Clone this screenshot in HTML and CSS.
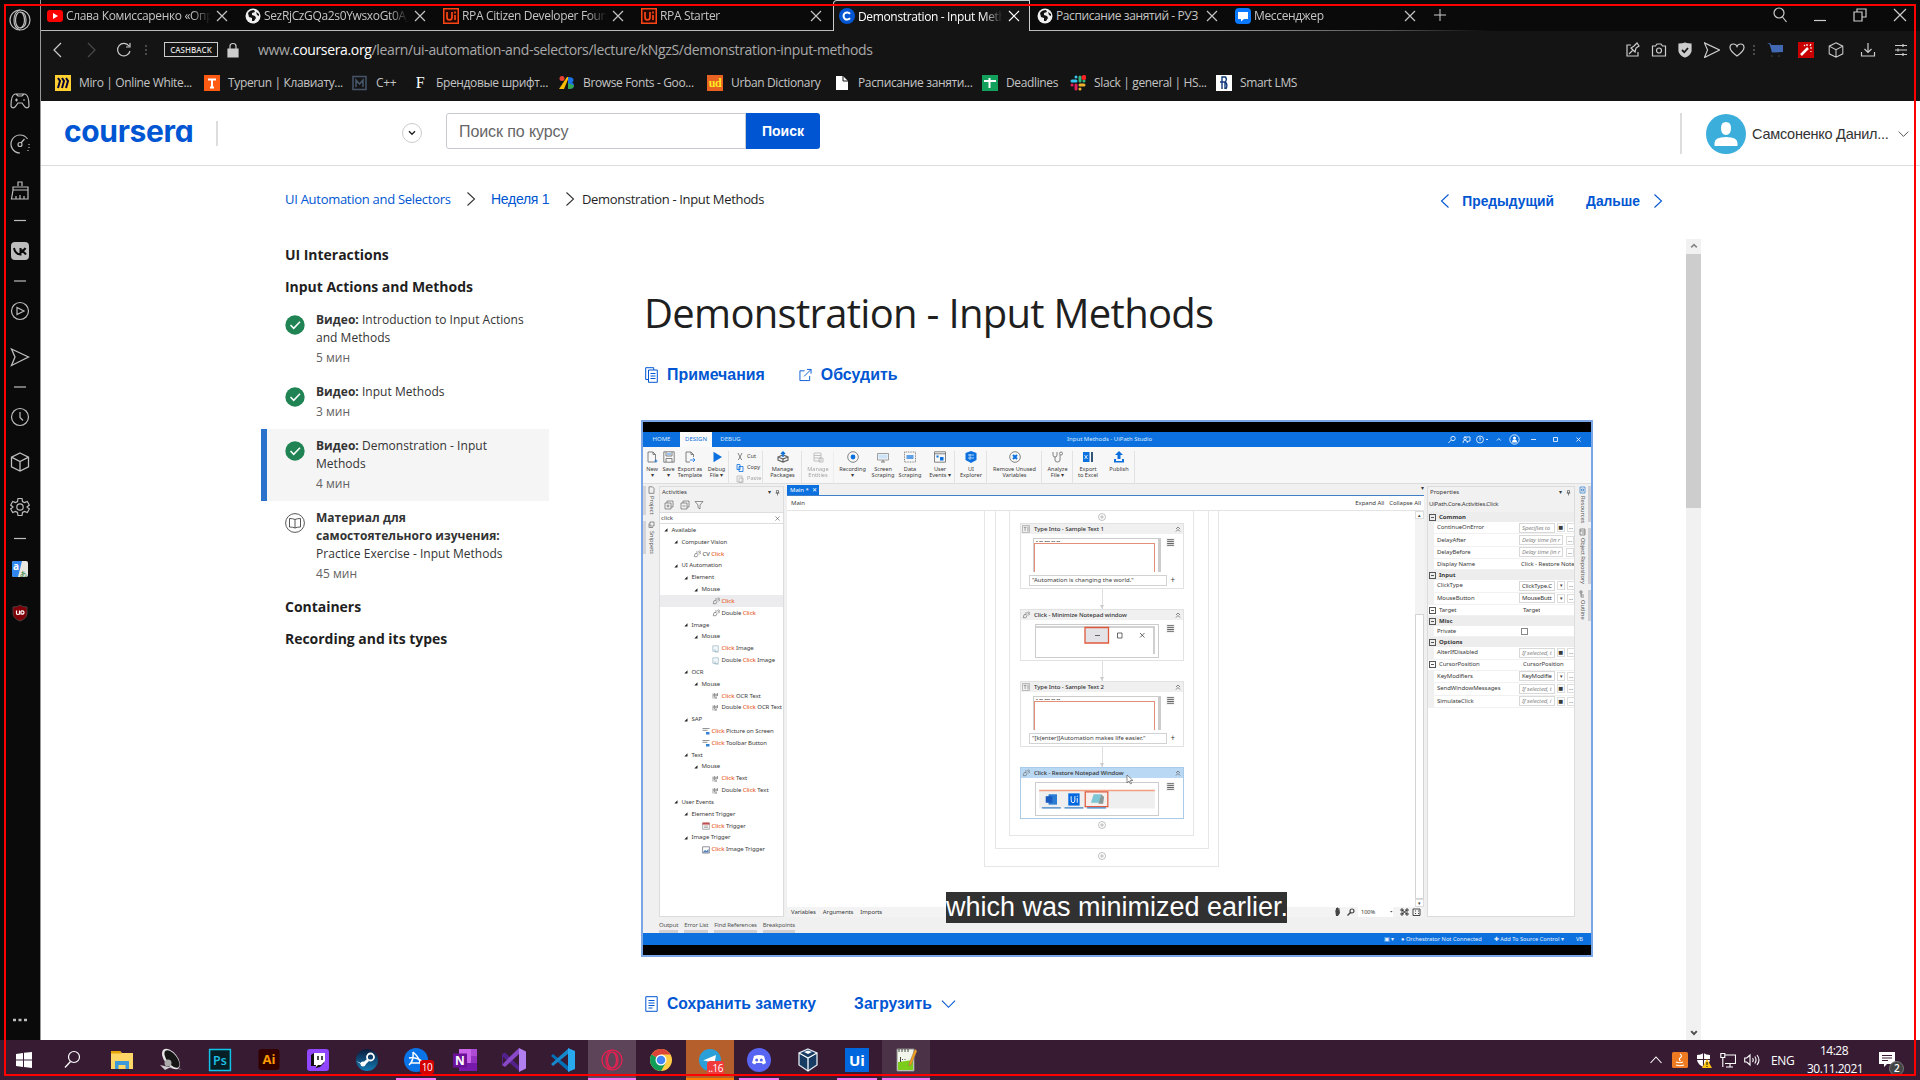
FILE: index.html
```html
<!DOCTYPE html>
<html lang="ru">
<head>
<meta charset="utf-8">
<title>Demonstration - Input Methods | Coursera</title>
<link rel="stylesheet" href="styles.css">
</head>
<body>
<svg class="defs" width="0" height="0">
  <symbol id="x" viewBox="0 0 12 12"><path d="M1 1l10 10M11 1L1 11" fill="none" stroke="currentColor" stroke-width="1.2"/></symbol>
  <symbol id="globe" viewBox="0 0 16 16"><circle cx="8" cy="8" r="7.500" fill="#eee"/><path d="M3 5q2-3 6-3l1 2-3 1v2l3 1 1 2-2 3H7V10L4 9zM11 4l3 2v2l-2-1z" fill="#111"/></symbol>
  <symbol id="uired" viewBox="0 0 16 16"><path d="M0 0h16v16H0z" fill="#fa4616"/><path d="M1.500 1.500h13v13h-13z" fill="#240700"/><path d="M4 4v5q0 3 2.500 3t2.500-3V4M12 7v5M12 3.500v2" fill="none" stroke="#fa4616" stroke-width="1.700"/></symbol>
  <symbol id="cube" viewBox="0 0 24 24"><path d="M12 3l8.500 4.200v9.600L12 21l-8.500-4.200V7.200zM3.500 7.200L12 11.500l8.500-4.300M12 11.500V21" fill="none" stroke="currentColor" stroke-width="1.300"/></symbol>
  <symbol id="send" viewBox="0 0 24 24"><path d="M3.500 4L20.500 12 3.500 20.500 7 12z" fill="none" stroke="currentColor" stroke-width="1.300"/></symbol>
  <symbol id="opera" viewBox="0 0 24 24"><g fill="none" stroke="currentColor" stroke-width="1.200"><circle cx="12" cy="12" r="10"/><ellipse cx="12" cy="12" rx="4.500" ry="8"/><path d="M12 4q6 0 6 8t-6 8M12 2Q6 4 6 12t6 10"/></g></symbol>
  <symbol id="right" viewBox="0 0 10 16"><path d="M1.500 1.500L8.500 8l-7 6.500" fill="none" stroke="currentColor" stroke-width="1.100"/></symbol>
  <symbol id="left" viewBox="0 0 10 16"><path d="M8.500 1.500L1.500 8l7 6.500" fill="none" stroke="currentColor" stroke-width="1.100"/></symbol>
  <symbol id="down" viewBox="0 0 16 10"><path d="M1 1.500l7 7 7-7" fill="none" stroke="currentColor" stroke-width="1.200"/></symbol>
  <symbol id="check" viewBox="0 0 20 20"><circle cx="10" cy="10" r="9.700" fill="#1f8354"/><path d="M5.500 10l3.200 3.300L15 6.800" fill="none" stroke="#fff" stroke-width="1.500"/></symbol>
  <symbol id="plusc" viewBox="0 0 8 8"><g fill="none" stroke="#999" stroke-width=".6"><circle cx="4" cy="4" r="3.500"/><path d="M4 2v4M2 4h4"/></g></symbol>
  <symbol id="tri" viewBox="0 0 4 4"><path d="M3.500 .3v3.200H.3z" fill="#222"/></symbol>
  <symbol id="mouse" viewBox="0 0 8 8"><g fill="none" stroke="#777" stroke-width=".7"><path d="M4 3.500l-2 .2-.8 3H4l1-2z"/><path d="M4 3.500V1M5.500 3l1.500-.6M5.300 1.500a1.500 1.500 0 1 1 1 2.500"/></g></symbol>
  <symbol id="pic" viewBox="0 0 8 8"><path d="M.8.800h5.500v5.500H.8zM3 4v3l3.500.2" fill="#f4f8fa" stroke="#8aabb8" stroke-width=".6"/></symbol>
  <symbol id="ocr" viewBox="0 0 8 8"><path d="M1 1.500v5M2.500 1v4M4 1.500v5M5.500 1v3M1 3h5M2 6h3" fill="none" stroke="#777" stroke-width=".7"/></symbol>
  <symbol id="sap" viewBox="0 0 8 8"><path d="M.5 1.500h7M.5 3.300h5" stroke="#777" stroke-width=".8"/><path d="M4 5h3.500v2.500H4z" fill="#3181d2"/></symbol>
  <symbol id="cal" viewBox="0 0 8 8"><path d="M.7 1h6.600v6.300H.7z" fill="#fff" stroke="#777" stroke-width=".6"/><path d="M.5.600h7v2h-7z" fill="#c84b4b"/><path d="M2 4h4M2 5.600h4" stroke="#888" stroke-width=".7"/></symbol>
  <symbol id="pict" viewBox="0 0 8 8"><path d="M.6.800h6.800v6.300H.6z" fill="#fff" stroke="#667" stroke-width=".7"/><path d="M1 6l2-2 1.500 1L6.500 3v3.500H1z" fill="#507fb3"/></symbol>
  <symbol id="up2" viewBox="0 0 6 6"><path d="M1 3l2-2 2 2M1 5.500l2-2 2 2" fill="none" stroke="#555" stroke-width=".7"/></symbol>
  <symbol id="ti" viewBox="0 0 8 8"><path d="M.5.500h7v7h-7z" fill="none" stroke="#888" stroke-width=".5"/><path d="M1.700 2.300h2.800M3.100 2.300V6M6 1.500v5" fill="none" stroke="#666" stroke-width=".6"/></symbol>
  <symbol id="pin" viewBox="0 0 5 6"><path d="M1.500.500h2v2.500h-2zM.6 3h3.800M2.500 3v2.500" fill="none" stroke="#444" stroke-width=".6"/></symbol>
  <symbol id="burger" viewBox="0 0 8 8"><path d="M0 0h8v8H0z" fill="#f3f3f3"/><path d="M1 1.500h6M1 3.200h6M1 4.900h6M1 6.500h6" stroke="#555" stroke-width=".8"/></symbol>
</svg>

<div class="screen">
<aside class="rail">
  <svg><use href="#opera"/></svg>
  <svg viewBox="0 0 24 24"><path d="M7 5h10q4 1 4 12-1 3-4 1l-3-4h-4l-3 4q-3 2-4-1Q3 6 7 5zM8 5l2 2h4l2-2M7 11h3M8.500 9.500v3M15 11h2"/></svg>
  <svg viewBox="0 0 24 24"><path d="M12 21a9 9 0 1 1 7.500-14M13 11l3.500-4M21 12v1M21 15v1M20 18v1"/><circle cx="12" cy="12.500" r="2"/></svg>
  <svg viewBox="0 0 24 24"><path d="M10 7V3h4v4M5 8h15v3H5zM5 11L3.500 20H20v-9M8 20v-3M12 20v-4M16 20v-3"/></svg>
  <svg viewBox="0 0 24 24"><path d="M6 11.500h12"/></svg>
  <svg viewBox="0 0 24 24"><rect x="3" y="3" width="18" height="18" rx="4" fill="#bdbdbd" stroke="none"/><path d="M6 9q1 6 6.500 6.500V9M12.500 12Q16 12 17.500 9M12.500 12.200Q16 12.500 18 15.500" stroke="#0a0a0a" stroke-width="2"/></svg>
  <svg viewBox="0 0 24 24"><path d="M6 12h12"/></svg>
  <svg viewBox="0 0 24 24"><circle cx="12" cy="12" r="8.500"/><path d="M9 8.500v7l7-3.500z"/></svg>
  <svg><use href="#send"/></svg>
  <svg viewBox="0 0 24 24"><path d="M6 12h12"/></svg>
  <svg viewBox="0 0 24 24"><circle cx="12" cy="12" r="8.500"/><path d="M12 7v5.500l3 3"/></svg>
  <svg><use href="#cube"/></svg>
  <svg viewBox="0 0 24 24"><circle cx="12" cy="12" r="3.200"/><path d="M10 3.500h4l.5 3 2 1.100 2.800-1.100 2 3.500-2.300 2 2.300 2-2 3.500-2.800-1.100-2 1.100-.5 3h-4l-.5-3-2-1.100-2.800 1.100-2-3.500L5 12l-2.300-2 2-3.500 2.800 1.100 2-1.100z"/></svg>
  <svg viewBox="0 0 24 24"><path d="M6 12.500h12"/></svg>
  <svg viewBox="0 0 24 24"><rect x="4" y="4" width="16" height="16" rx="2" fill="#e8e8e0" stroke="none"/><path d="M4 6q0-2 2-2h8l-4 16H6q-2 0-2-2z" fill="#2f86ee" stroke="none"/><text x="5" y="13" font-size="10" fill="#fff" stroke="none" font-weight="bold">a</text><text x="12" y="18.500" font-size="7" fill="#287a3a" stroke="none">あ</text></svg>
  <svg viewBox="0 0 24 24"><path d="M5 6q5 0 7-2 2 2 7 2v7q-1 5-7 7-6-2-7-7z" fill="#800008" stroke="#555" stroke-width=".7"/><path d="M8.500 9.500v3q0 1 1.500 1t1.500-1v-3M13 10v3q3 .5 3-1.500t-3-1.500" stroke="#fff"/></svg>
  <svg viewBox="0 0 24 24"><path d="M5 12h3M10.500 12h3M16 12h3" stroke-width="2.500"/></svg>
</aside>

<div class="browser">
  <nav class="tabs">
    <div class="tab"><svg class="fav" viewBox="0 0 16 16"><rect y="2" width="16" height="12" rx="3" fill="#f00"/><path d="M6 5v6l5-3z" fill="#fff"/></svg><span>Слава Комиссаренко «Опр</span><svg class="cl"><use href="#x"/></svg></div>
    <div class="tab"><svg class="fav"><use href="#globe"/></svg><span>SezRjCzGQa2s0YwsxoGt0A_</span><svg class="cl"><use href="#x"/></svg></div>
    <div class="tab"><svg class="fav"><use href="#uired"/></svg><span>RPA Citizen Developer Foun</span><svg class="cl"><use href="#x"/></svg></div>
    <div class="tab"><svg class="fav"><use href="#uired"/></svg><span>RPA Starter</span><svg class="cl"><use href="#x"/></svg></div>
    <div class="tab on"><svg class="fav" viewBox="0 0 16 16"><circle cx="8" cy="8" r="8" fill="#0056d2"/><path d="M11 5.800a3.600 3.600 0 1 0 0 4.400" fill="none" stroke="#fff" stroke-width="2"/></svg><span>Demonstration - Input Meth</span><svg class="cl"><use href="#x"/></svg></div>
    <div class="tab"><svg class="fav"><use href="#globe"/></svg><span class="full">Расписание занятий - РУЗ</span><svg class="cl"><use href="#x"/></svg></div>
    <div class="tab"><svg class="fav" viewBox="0 0 16 16"><rect width="16" height="16" rx="4" fill="#0a78ff"/><path d="M3 4h10v7H9l-3 2.500V11H3z" fill="#fff"/></svg><span>Мессенджер</span><svg class="cl"><use href="#x"/></svg></div>
    <svg class="new" viewBox="0 0 12 12"><path d="M6 0v12M0 6h12"/></svg>
    <div class="win">
      <svg viewBox="0 0 16 16"><circle cx="7" cy="6" r="5"/><path d="M10.500 10l4 5"/></svg>
      <svg viewBox="0 0 16 16"><path d="M2 13.500h12"/></svg>
      <svg viewBox="0 0 16 16"><path d="M2 5h8v9H2zM5 5V2h9v8h-4"/></svg>
      <svg viewBox="0 0 16 16"><path d="M2 2l12 12M14 2L2 14"/></svg>
    </div>
  </nav>
  <div class="address">
    <svg viewBox="0 0 16 16"><path d="M11 1L4 8l7 7"/></svg>
    <svg class="dim" viewBox="0 0 16 16"><path d="M5 1l7 7-7 7"/></svg>
    <svg viewBox="0 0 16 16"><path d="M13 4a6.300 6.300 0 1 0 1 5M14 1v4h-4"/></svg>
    <svg class="dim" viewBox="0 0 16 16"><path d="M6 3v2M6 7v2M6 11v2" stroke-width="2"/></svg>
    <span class="cash">CASHBACK</span>
    <svg viewBox="0 0 16 16"><path d="M3 7h10v8H3z" fill="#ccc"/><path d="M5 7V4q0-2.500 3-2.500T11 4v3"/></svg>
    <span class="url">www.<b>coursera.org</b>/learn/ui-automation-and-selectors/lecture/kNgzS/demonstration-input-methods</span>
    <div class="tools">
      <svg viewBox="0 0 16 16"><path d="M6 3H2v11h11v-4M4 12l4-4M6 6l4 4 1-4 3-2-2-3-3 3zM14 4l-2-3"/></svg>
      <svg viewBox="0 0 16 16"><path d="M1.500 4h3L6 2h4l1.500 2h3v10h-13z"/><circle cx="8" cy="8.500" r="2.500"/></svg>
      <svg viewBox="0 0 16 16"><path d="M2 2q4 0 6-1 2 1 6 1v7q-1 4-6 6-5-2-6-6z" fill="#ccc"/><path d="M5 8l2.300 2.300L11 6" stroke="#141414" stroke-width="1.800"/></svg>
      <svg viewBox="3 3 18 18"><use href="#send" width="24" height="24"/></svg>
      <svg viewBox="0 0 16 16"><path d="M8 14Q1 9 1 5.500 1 2 4.500 2 7 2 8 4.500 9 2 11.500 2 15 2 15 5.500 15 9 8 14z"/></svg>
      <svg class="dim" viewBox="0 0 16 16"><path d="M8 3v2M8 7v2M8 11v2" stroke-width="2"/></svg>
      <svg viewBox="0 0 16 16"><path d="M0 1h3l1.500 2H16v7l-11 .5L2.500 2z" fill="#426ab4" stroke="none"/><circle cx="5" cy="14" r="1" fill="#333" stroke="none"/><circle cx="12" cy="14" r="1" fill="#333" stroke="none"/></svg>
      <svg viewBox="0 0 16 16"><path d="M0 0h16v16H0z" fill="#c80000" stroke="none"/><path d="M3 13l7-7" stroke="#fff" stroke-width="2.500"/><path d="M9 2v2M13 2l-1 2M14 6h-2M13 9v1M6 3l1 1" stroke="#fff"/></svg>
      <svg viewBox="2 2 20 20"><use href="#cube" width="24" height="24"/></svg>
      <svg viewBox="0 0 16 16"><path d="M8 1v9M4.500 7L8 10.500 11.500 7M1.500 10v4h13v-4"/></svg>
      <svg viewBox="0 0 16 16"><path d="M2 3.500h12M2 8h12M2 12.500h12M10 2v3M5 6.500v3M10 11v3"/></svg>
    </div>
  </div>
  <div class="bookmarks">
    <a><svg viewBox="0 0 16 16"><path d="M0 0h16v16H0z" fill="#ffd02f"/><path d="M3 3l2 3-2 7M7 3l2 3-2 7M11 3l2 3-2 7" fill="none" stroke="#050038" stroke-width="2"/></svg>Miro | Online White...</a>
    <a><svg viewBox="0 0 16 16"><path d="M0 0h16v16H0z" fill="#ff5a14"/><path d="M4 4.500h8M8 4v8.500M6 12.500h4" stroke="#fff" stroke-width="2"/></svg>Typerun | Клавиату...</a>
    <a><svg viewBox="0 0 16 16"><path d="M1 1.500h13v13H1zM4 12V5l3.500 4L11 5v7" fill="none" stroke="#465569" stroke-width="1.500"/></svg>C++</a>
    <a><i class="f">F</i>Брендовые шрифт...</a>
    <a><svg viewBox="0 0 16 16"><circle cx="3" cy="3.500" r="2.500" fill="#ea4335"/><path d="M8 2h2L5 14H0z" fill="#fbbc04"/><path d="M9 2v12q6 0 6-3.500 0-2.500-2-3 1.500-1 1.500-2.500Q14.500 2 9 2z" fill="#1a73e8"/><path d="M9 8v6q6 0 6-3.500z" fill="#34a853"/></svg>Browse Fonts - Goo...</a>
    <a><i class="ud">ud</i>Urban Dictionary</a>
    <a><svg viewBox="0 0 16 16"><path d="M2 1h7l5 5v9H2z" fill="#fff"/><path d="M9 1v5h5" stroke="#141414" fill="none"/></svg>Расписание заняти...</a>
    <a><svg viewBox="0 0 16 16"><path d="M0 0h16v16H0z" fill="#12a05c"/><path d="M2 6h12M7.500 3v10" stroke="#fff" stroke-width="2"/></svg>Deadlines</a>
    <a><svg viewBox="0 0 16 16"><g stroke-width="3" stroke-linecap="round"><path d="M2 6h4M6 2v.1" stroke="#36c5f0"/><path d="M10 2v4M14 6h-.1" stroke="#2eb67d"/><path d="M10 10h4M10 14v-.1" stroke="#ecb22e"/><path d="M6 10v4M2 10h.1" stroke="#e01e5a"/></g><circle cx="14" cy="2.500" r="2.500" fill="#f22"/></svg>Slack | general | HS...</a>
    <a><svg viewBox="0 0 16 16"><path d="M0 0h16v16H0z" fill="#fff"/><path d="M6 14V2h3.500q2 2.500-.5 5H6M4 7h5.500q2.500 3 .5 7M9 7v7" fill="none" stroke="#123a7a" stroke-width="1.400"/></svg>Smart LMS</a>
  </div>

  <div class="page">
    <header class="top">
      <span class="logo">coursera</span>
      <i class="bar"></i>
      <span class="drop"><svg viewBox="0 0 8 6"><path d="M1 1.200l3 3 3-3" fill="none" stroke="#222" stroke-width="1.400"/></svg></span>
      <div class="search"><span>Поиск по курсу</span><button>Поиск</button></div>
      <div class="user"><svg class="ava" viewBox="0 0 40 40"><circle cx="20" cy="20" r="20" fill="#3caedb"/><path d="M20 8q5 0 5 6 0 7-5 7t-5-7q0-6 5-6zM8.500 32v-3q0-6 11.500-6t11.500 6v3z" fill="#fff"/></svg><span>Самсоненко Данил...</span><svg class="chev"><use href="#down"/></svg></div>
    </header>
    <div class="crumbs">
      <a>UI Automation and Selectors</a><svg><use href="#right"/></svg><a>Неделя 1</a><svg><use href="#right"/></svg><span>Demonstration - Input Methods</span>
      <div class="pager"><svg><use href="#left"/></svg><b>Предыдущий</b><b>Дальше</b><svg><use href="#right"/></svg></div>
    </div>
    <div class="cols">
      <nav class="lessons">
        <h3>UI Interactions</h3>
        <h3>Input Actions and Methods</h3>
        <div class="les"><svg><use href="#check"/></svg><p><b>Видео:</b> Introduction to Input Actions<br>and Methods<small>5 мин</small></p></div>
        <div class="les"><svg><use href="#check"/></svg><p><b>Видео:</b> Input Methods<small>3 мин</small></p></div>
        <div class="les cur"><svg><use href="#check"/></svg><p><b>Видео:</b> Demonstration - Input<br>Methods<small>4 мин</small></p></div>
        <div class="les"><svg viewBox="0 0 20 20"><g fill="none" stroke="#444" stroke-width=".9"><circle cx="10" cy="10" r="9.400"/><path d="M10 6.500Q8 5.500 4.500 5.500v8.500q3.500 0 5.500 1 2-1 5.500-1V5.500Q12 5.500 10 6.500V15"/></g></svg><p><b>Материал для<br>самостоятельного изучения:</b><br>Practice Exercise - Input Methods<small>45 мин</small></p></div>
        <h3>Containers</h3>
        <h3>Recording and its types</h3>
      </nav>
      <main>
        <h1>Demonstration - Input Methods</h1>
        <div class="acts">
          <svg viewBox="0 0 13 16"><path d="M3 12.500H.7V.700h8V3M3.500 3h8.800v12.300H3.500zM5.500 6.500h5M5.500 9h5M5.500 11.500h5"/></svg><b>Примечания</b>
          <svg viewBox="0 0 14 14"><path d="M6 2.500H1v10.500h10.500V8M8.500 1H13v4.500M13 1L5.500 8.500"/></svg><b>Обсудить</b>
        </div>

        <div class="video">
          <div class="vtitle">
            <span>HOME</span><span class="sel">DESIGN</span><span>DEBUG</span><em>Input Methods - UiPath Studio</em>
            <svg viewBox="0 0 148 15"><g fill="none" stroke="#e8f1fc" stroke-width=".9"><circle cx="10" cy="6.500" r="2.200"/><path d="M8.300 8l-3 3"/><path d="M21 5h6v4l-3 .5M20 11q0-3 2-3t2.500 3"/><circle cx="22" cy="6.500" r="1.300"/><circle cx="37" cy="7.500" r="3.500"/><path d="M36 6.500q1-1.500 2 0l-1 1.200v1M43 7.500h2M54 8.500l1.800-2 1.800 2"/><circle cx="71.500" cy="7.500" r="4.700"/><path d="M88 7.500h5M110.500 5.500h4v4h-4zM133.500 5.500l4 4M137.500 5.500l-4 4"/></g><path d="M69 10.500q0-3 2.500-3t2.500 3z" fill="#fff"/><circle cx="71.500" cy="6" r="1.500" fill="#fff"/></svg>
          </div>
          <div class="ribbon">
            <div class="rb"><svg viewBox="0 0 12 12"><path d="M2 1h5l2.500 2.500V11H2zM7 1v2.500h2.500"/><path d="M8.500 10h3M10 8.500v3" class="bl"/></svg>New<br>▾</div>
            <div class="rb"><svg viewBox="0 0 12 12"><path d="M.8.800h10.400v10.400H.8zM3 1v4h6V1M3 11V7.500h6V11"/><path d="M4 3h4" class="bl"/></svg>Save<br>▾</div>
            <div class="rb"><svg viewBox="0 0 12 12"><path d="M6 11H2V1h5l2.500 2.500V6M7 1v2.500h2.500"/><path d="M6 9h5M9 7l2 2-2 2" class="bl"/></svg>Export as<br>Template</div>
            <div class="rb"><svg viewBox="0 0 12 12"><path d="M2.500.800L11 6l-8.500 5.200z" class="fb"/></svg>Debug<br>File ▾</div>
            <div class="rc"><span><svg viewBox="0 0 8 8"><path d="M2 0l3 6M6 0L3 6M2 6.500h1M5 6.500h1"/></svg>Cut</span><span><svg viewBox="0 0 8 8"><path d="M1 .5h3v5H1zM3 2.500h4v5H3z" class="bl"/></svg>Copy</span><span class="off"><svg viewBox="0 0 8 8"><path d="M1 1h5v6H1zM3 3h4v4.500H3z"/></svg>Paste</span></div>
            <div class="rb"><svg viewBox="0 0 12 12"><path d="M1 6l5-2 5 2v3l-5 2-5-2zM6 7v4M1 6l5 2 5-2" stroke-width="1.200"/><path d="M6 6V1M4 3l2-2 2 2" class="bl" stroke-width="1.500"/></svg>Manage<br>Packages</div>
            <div class="rb off"><svg viewBox="0 0 12 12"><path d="M2 2h7v8H2zM2 4.500h7M2 7h7M7 7h4v4H7z"/></svg>Manage<br>Entities</div>
            <div class="rb"><svg viewBox="0 0 12 12"><circle cx="6" cy="6" r="5.300"/><circle cx="6" cy="6" r="2.400" class="fb"/></svg>Recording<br>▾</div>
            <div class="rb"><svg viewBox="0 0 12 12"><path d="M.5 2.500h11v6.500H.5z" stroke="#888"/><path d="M1.500 3.500h9v4h-9z" fill="#cde3f7" stroke="none"/><path d="M4 11h4M6 9v2"/></svg>Screen<br>Scraping</div>
            <div class="rb"><svg viewBox="0 0 12 12"><path d="M.5 1h11v10H.5z" stroke-dasharray="1 .7"/><path d="M2.500 4h7v4h-7z" class="fb" opacity=".65"/></svg>Data<br>Scraping</div>
            <div class="rb"><svg viewBox="0 0 12 12"><path d="M.5.800h11v10.400H.5zM.5 2.800h11"/><path d="M2.500 4.500h2v2h-2zM6 6h3.500v3.500H6z" class="fb"/></svg>User<br>Events ▾</div>
            <div class="rb"><svg viewBox="0 0 12 12"><path d="M6 0l5.500 2v7L6 12 .5 9V2z" class="fb"/><path d="M3 4h6M3 7h6M5 3v6" stroke="#cfe4fa"/></svg>UI<br>Explorer</div>
            <div class="rb"><svg viewBox="0 0 12 12"><circle cx="6" cy="6" r="5.300"/><path d="M4 4l4 4M8 4L4 8" class="bl" stroke-width="2"/></svg>Remove Unused<br>Variables</div>
            <div class="rb"><svg viewBox="0 0 12 12"><path d="M1 1v3q0 2 2 2t2-2V1M3 6v3q0 2 2.500 2T8 9V4"/><circle cx="9" cy="2.500" r="1.500"/></svg>Analyze<br>File ▾</div>
            <div class="rb"><svg viewBox="0 0 12 12"><path d="M1 1h6.500v10H1z" class="fb"/><path d="M2.500 4l3 4M5.500 4l-3 4" stroke="#fff"/><path d="M9 1h2v10H9z" fill="#357" stroke="none"/></svg>Export<br>to Excel</div>
            <div class="rb"><svg viewBox="0 0 12 12"><path d="M6 0l4 4H7.500v4h-3V4H2zM1 8h2v2h6V8h2v3.500H1z" class="fb"/></svg>Publish</div>
            <div></div>
          </div>
          <div class="work">
            <div class="dock ldock"><span class="p1"><svg viewBox="0 0 7 8"><path d="M1 .8h3.500l1.500 1.500v5H1z"/></svg>Project</span><span class="p2"><svg viewBox="0 0 7 8"><path d="M2 1h4v4H2zM1 2.500v4h4"/></svg>Snippets</span></div>
            <section class="acti">
              <div class="ph">Activities<i></i>▾<svg><use href="#pin"/></svg></div>
              <div class="pt"><svg viewBox="0 0 40 10"><path d="M2 3h6v6H2zM4 3V1h6v6H8M5 4.500v3M3.500 6h3M18 3h6v6h-6zM20 3V1h6v6h-2M19.500 6h3M32 1.500h8L37 5v4l-2-1.500V5z" fill="none" stroke="#666" stroke-width=".7"/></svg></div>
              <div class="ps">click<svg><use href="#x"/></svg></div>
              <ul class="tree">
                <li class="l0"><svg><use href="#tri"/></svg>Available</li>
                <li class="l1"><svg><use href="#tri"/></svg>Computer Vision</li>
                <li class="l2 leaf"><svg><use href="#mouse"/></svg>CV&nbsp;<b>Click</b></li>
                <li class="l1"><svg><use href="#tri"/></svg>UI Automation</li>
                <li class="l2"><svg><use href="#tri"/></svg>Element</li>
                <li class="l3"><svg><use href="#tri"/></svg>Mouse</li>
                <li class="l4 leaf hot"><svg><use href="#mouse"/></svg><b>Click</b></li>
                <li class="l4 leaf"><svg><use href="#mouse"/></svg>Double&nbsp;<b>Click</b></li>
                <li class="l2"><svg><use href="#tri"/></svg>Image</li>
                <li class="l3"><svg><use href="#tri"/></svg>Mouse</li>
                <li class="l4 leaf"><svg><use href="#pic"/></svg><b>Click</b>&nbsp;Image</li>
                <li class="l4 leaf"><svg><use href="#pic"/></svg>Double&nbsp;<b>Click</b>&nbsp;Image</li>
                <li class="l2"><svg><use href="#tri"/></svg>OCR</li>
                <li class="l3"><svg><use href="#tri"/></svg>Mouse</li>
                <li class="l4 leaf"><svg><use href="#ocr"/></svg><b>Click</b>&nbsp;OCR Text</li>
                <li class="l4 leaf"><svg><use href="#ocr"/></svg>Double&nbsp;<b>Click</b>&nbsp;OCR Text</li>
                <li class="l2"><svg><use href="#tri"/></svg>SAP</li>
                <li class="l3 leaf"><svg><use href="#sap"/></svg><b>Click</b>&nbsp;Picture on Screen</li>
                <li class="l3 leaf"><svg><use href="#sap"/></svg><b>Click</b>&nbsp;Toolbar Button</li>
                <li class="l2"><svg><use href="#tri"/></svg>Text</li>
                <li class="l3"><svg><use href="#tri"/></svg>Mouse</li>
                <li class="l4 leaf"><svg><use href="#ocr"/></svg><b>Click</b>&nbsp;Text</li>
                <li class="l4 leaf"><svg><use href="#ocr"/></svg>Double&nbsp;<b>Click</b>&nbsp;Text</li>
                <li class="l1"><svg><use href="#tri"/></svg>User Events</li>
                <li class="l2"><svg><use href="#tri"/></svg>Element Trigger</li>
                <li class="l3 leaf"><svg><use href="#cal"/></svg><b>Click</b>&nbsp;Trigger</li>
                <li class="l2"><svg><use href="#tri"/></svg>Image Trigger</li>
                <li class="l3 leaf"><svg><use href="#pict"/></svg><b>Click</b>&nbsp;Image Trigger</li>
              </ul>
            </section>
            <section class="mainp">
              <div class="mt"><span>Main * &nbsp;✕</span><i>▾</i></div>
              <div class="mb"><span>Main</span><span>Expand All</span><span>Collapse All</span></div>
              <div class="canvas">
                <div class="f1"><div class="f2"><div class="f3">
                  <svg class="pc"><use href="#plusc"/></svg>
                  <div class="card big"><div class="ch"><svg><use href="#ti"/></svg>Type Into - Sample Text 1<svg class="u"><use href="#up2"/></svg></div><div class="cb"><div class="shot red"><i>- -- --- -- --</i><u></u></div><svg><use href="#burger"/></svg></div><div class="ci"><span>"Automation is changing the world."</span><b>+</b></div></div>
                  <div class="arr"></div>
                  <div class="card"><div class="ch"><svg><use href="#mouse"/></svg>Click - Minimize Notepad window<svg class="u"><use href="#up2"/></svg></div><div class="cb"><div class="shot"><svg class="tb" viewBox="0 0 122 32"><path d="M0 2h118v27" fill="none" stroke="#c4c4c4" stroke-width="1.600"/><path d="M49 2.500h23.500v15.500H49z" fill="#e3e3e7" stroke="#e0593c" stroke-width="1.300"/><path d="M59 10.500h5M81.500 8h4.500v5h-4.500zM104 8l4.500 4.500M108.500 8l-4.500 4.500" fill="none" stroke="#444" stroke-width=".8"/></svg></div><svg><use href="#burger"/></svg></div></div>
                  <div class="arr"></div>
                  <div class="card big"><div class="ch"><svg><use href="#ti"/></svg>Type Into - Sample Text 2<svg class="u"><use href="#up2"/></svg></div><div class="cb"><div class="shot red"><i>- -- --- -- --</i><u></u></div><svg><use href="#burger"/></svg></div><div class="ci"><span>"[k(enter)]Automation makes life easier."</span><b>+</b></div></div>
                  <div class="arr"></div>
                  <div class="card act"><div class="ch"><svg><use href="#mouse"/></svg>Click - Restore Notepad Window<svg class="u"><use href="#up2"/></svg></div><div class="cb"><div class="shot"><svg class="tb" viewBox="0 0 123 34"><path d="M0 8h123v19H0z" fill="#efefef"/><path d="M0 8h123" stroke="#f0a080" stroke-width="1.500"/><path d="M10 12h9v11h-9z" fill="#2b7cd3"/><path d="M7 14h7v7H7z" fill="#185abd"/><path d="M31 11h12v13H31z" fill="#0067df"/><path d="M34 14v4q0 3 2 3t2-3v-4M40.500 16v5M40.500 13.500v1.200" fill="none" stroke="#fff"/><path d="M49 9.500h24v15.500H49z" fill="#f6efec" stroke="#e0593c" stroke-width="1.300"/><path d="M58 12h8l-2 9h-9z" fill="#7ec5d6"/><path d="M66 12l3 3-1 7h-5z" fill="#899"/><path d="M3 26.500h20M27 26.500h20M51 26.500h20" stroke="#3b82c8" stroke-width="1.300"/></svg></div><svg><use href="#burger"/></svg></div></div>
                  <svg class="pc low"><use href="#plusc"/></svg>
                </div></div><svg class="pc"><use href="#plusc"/></svg></div>
                <div class="vs"><i>▴</i><b></b><i>▾</i></div>
                <svg class="cursor" viewBox="0 0 8 12"><path d="M1 1v8l2-2 1.500 3 1-.5-1.200-3H7z" fill="#fff" stroke="#444" stroke-width=".6"/></svg>
              </div>
              <div class="mf"><span>Variables</span><span>Arguments</span><span>Imports</span><svg viewBox="0 0 92 10"><path d="M5 2l1 2V1h1v3-3.500h1V4l.3-3h1L10 6 8 9H6z" fill="#444"/><circle cx="22" cy="4" r="2" fill="none" stroke="#444" stroke-width="1.200"/><path d="M20.500 5.500l-3 3" stroke="#444" stroke-width="1.500"/><path d="M28 0h35v10H28z" fill="#fff"/><text x="31" y="7.300" font-size="5.700" fill="#333">100%</text><path d="M60 4l1.300 1.500L62.600 4z" fill="#555"/><path d="M71 2h2v2h-2zM76 2h2v2h-2zM71 6h2v2h-2zM76 6h2v2h-2zM72 3l5 4M77 3l-5 4M83 2h7v6.500h-7zM85 4h1M88 4h1M85 6.500h1M88 6.500h1" fill="none" stroke="#333" stroke-width=".9"/></svg></div>
            </section>
            <section class="props">
              <div class="ph">Properties<i></i>▾<svg><use href="#pin"/></svg></div>
              <div class="pn">UiPath.Core.Activities.Click</div>
              <div class="pg">Common</div>
              <div class="pr w s"><span>ContinueOnError</span><em>Specifies to</em><u>■</u><s>...</s></div>
              <div class="pr w l"><span>DelayAfter</span><em>Delay time (in r</em><s>...</s></div>
              <div class="pr w l"><span>DelayBefore</span><em>Delay time (in r</em><s>...</s></div>
              <div class="pr"><span>Display Name</span><q>Click - Restore Notep</q></div>
              <div class="pg">Input</div>
              <div class="pr w n"><span>ClickType</span><em>ClickType.C</em><u>▾</u><s>...</s></div>
              <div class="pr w n"><span>MouseButton</span><em>MouseButt</em><u>▾</u><s>...</s></div>
              <div class="pr ex"><span>Target</span><q>Target</q></div>
              <div class="pg">Misc</div>
              <div class="pr"><span>Private</span><i></i></div>
              <div class="pg">Options</div>
              <div class="pr w s"><span>AlterIfDisabled</span><em>If selected, t</em><u>■</u><s>...</s></div>
              <div class="pr ex"><span>CursorPosition</span><q>CursorPosition</q></div>
              <div class="pr w n"><span>KeyModifiers</span><em>KeyModifie</em><u>▾</u><s>...</s></div>
              <div class="pr w s"><span>SendWindowMessages</span><em>If selected, t</em><u>■</u><s>...</s></div>
              <div class="pr w s"><span>SimulateClick</span><em>If selected, i</em><u>■</u><s>...</s></div>
            </section>
            <div class="dock rdock"><span class="p3"><svg viewBox="0 0 7 8"><path d="M1 1h5v6H1zM2.500 3h2v2h-2z" stroke="#2a78c8"/></svg>Resources</span><span class="p4"><svg viewBox="0 0 7 8"><path d="M1 1h5v6H1zM1 3h5M3 5h3"/></svg>Object Repository</span><span class="p5"><svg viewBox="0 0 7 8"><path d="M1 1h2v2H1zM2 3v4h3M2 5h3"/></svg>Outline</span></div>
          </div>
          <div class="outs"><span>Output</span><span>Error List</span><span>Find References</span><span>Breakpoints</span></div>
          <div class="status"><span>▣ ▾</span><span>● Orchestrator Not Connected</span><span>✚ Add To Source Control ▾</span><span>VB</span></div>
          <div class="caption">which was minimized earlier.</div>
        </div>

        <div class="acts below">
          <svg viewBox="0 0 13 16"><path d="M.8.700h11.400v14.600H.8zM3.500 4.500h6M3.500 7h6M3.500 9.500h6M3.500 12h4"/></svg><b>Сохранить заметку</b>
          <b>Загрузить</b><svg class="dn"><use href="#down"/></svg>
        </div>
      </main>
      <div class="scroll"><svg viewBox="0 0 16 16"><path d="M5 9l3-3 3 3" fill="none" stroke="#888" stroke-width="1.800"/></svg><i></i><svg viewBox="0 0 16 16"><path d="M5 6.500l3 3.200 3-3.200" fill="none" stroke="#505050" stroke-width="2.200"/></svg></div>
    </div>
  </div>
</div>
</div>

<footer class="taskbar">
  <div><svg viewBox="0 0 24 24"><path d="M4 6l7-1v6.500H4zM12 4.800L20 4v7.500h-8zM4 12.500h7V19l-7-1zM12 12.500h8V20l-8-.9z" fill="#fff"/></svg></div>
  <div><svg viewBox="0 0 24 24"><circle cx="13" cy="9" r="5.500" fill="none" stroke="#fff" stroke-width="1.200"/><path d="M9.500 13.500L4 19.500" stroke="#fff" stroke-width="1.300"/></svg></div>
  <div><svg viewBox="0 0 24 24"><path d="M1 3h9l2 2h11v16H1z" fill="#ffd766"/><path d="M1 3h9l1.500 2.500H1z" fill="#e6a60a"/><path d="M5 21v-8h14v8h-3.500v-4h-7v4z" fill="#3c9ad8"/></svg></div>
  <div><svg viewBox="0 0 24 24"><path d="M1 17l5 5 4-2 13 1Q19 22 10 19z" fill="#ccc"/><ellipse cx="12" cy="11" rx="6.500" ry="12" transform="rotate(-38 12 11)" fill="#e4e4e4"/><ellipse cx="13" cy="11" rx="5" ry="10.500" transform="rotate(-38 13 11)" fill="#151515"/><circle cx="9" cy="15" r="3.500" fill="#aaa"/></svg></div>
  <div><svg viewBox="0 0 24 24"><path d="M1.600 1.600h20.800v20.800H1.600z" fill="#061e26" stroke="#0fc4e8" stroke-width="1.500"/><text x="12" y="16.500" text-anchor="middle" font-size="12.500" font-weight="600" fill="#1fc3ea">Ps</text></svg></div>
  <div><svg viewBox="0 0 24 24"><rect x="1.500" y="1" width="21" height="21" rx="3" fill="#330000"/><text x="12" y="16" text-anchor="middle" font-size="13" font-weight="700" fill="#ff9a00">Ai</text></svg></div>
  <div><svg viewBox="0 0 24 24"><rect x="1" y="1" width="22" height="22" rx="3" fill="#9146ff"/><path d="M5 7l3-2v3h10v7l-4 4-4 1v-2H5z" fill="#111"/><path d="M8 5h11v8l-4 4h-3l-2 2v-2H8z" fill="#fff"/><path d="M12 8v4M16 8v4" stroke="#111" stroke-width="1.500"/></svg></div>
  <div><svg viewBox="0 0 24 24"><defs><linearGradient id="st" x2="0" y2="1"><stop stop-color="#0b1b3a"/><stop offset="1" stop-color="#137bb5"/></linearGradient></defs><circle cx="12" cy="12" r="11" fill="url(#st)"/><path d="M1 13l6 2.500 5-4.500 2 2-5 5z" fill="#fff"/><circle cx="15.500" cy="9" r="3.500" fill="none" stroke="#fff" stroke-width="1.800"/><circle cx="8" cy="16" r="2.500" fill="#fff"/></svg></div>
  <div class="run"><svg viewBox="0 0 24 24"><circle cx="12" cy="12" r="12" fill="#0a73e8"/><path d="M9 4q7 6 8 14M9 4q1 9-4 13M5 10q9-1 15 5M7 15h9" fill="none" stroke="#fff" stroke-width="1.500"/></svg><em>10</em></div>
  <div><svg viewBox="0 0 24 24"><path d="M6 1h18v22H6z" fill="#ca64ea"/><path d="M18 1h6v7h-6z" fill="#ae4bd5"/><path d="M18 8h6v7h-6z" fill="#9332bf"/><path d="M6 15h18v8H6z" fill="#7719aa"/><path d="M0 5.500h14v14H0z" fill="#6b1099"/><text x="7" y="17" text-anchor="middle" font-size="12" font-weight="700" fill="#fff">N</text></svg></div>
  <div><svg viewBox="0 0 24 24"><path d="M0 6l3-1.500L17 18v5L1 9v7L0 17z" fill="#52218a"/><path d="M0 17l3 2L17 6V0L6 10.500z" fill="#8848c8"/><path d="M17 0l7 3.500v17L17 24z" fill="#b17ff0"/></svg></div>
  <div><svg viewBox="0 0 24 24"><path d="M0 8l2-2 16 13v5z" fill="#0070b8"/><path d="M0 16l2 2L18 5V0z" fill="#1688cc"/><path d="M17 0l7 3v18l-7 3z" fill="#28a8ee"/></svg></div>
  <div class="lit opr"><svg><use href="#opera"/></svg></div>
  <div><svg viewBox="0 0 24 24"><circle cx="12" cy="12" r="11" fill="#fc4"/><path d="M12 12L2.500 6.500A11 11 0 0 1 21.500 6.500H12z" fill="#db4437"/><path d="M2.500 6.500A11 11 0 0 0 12 23l4.800-8.300L12 12z" fill="#0f9d58"/><circle cx="12" cy="12" r="5.500" fill="#fff"/><circle cx="12" cy="12" r="4.300" fill="#4285f4"/></svg></div>
  <div class="tg"><svg viewBox="0 0 24 24"><circle cx="12" cy="12" r="11" fill="#2ba0d8"/><path d="M5 12.500L18 7l-2 11-4-3-2 2-.5-4z" fill="#fff"/></svg><em>..16</em></div>
  <div class="run"><svg viewBox="0 0 24 24"><circle cx="12" cy="12" r="12" fill="#5865f2"/><path d="M7 8q5-2 10 0l2 7-3 1.500-1.200-1.500H9.200L8 16.500 5 15z" fill="#fff"/><circle cx="9.700" cy="12" r="1.500" fill="#5865f2"/><circle cx="14.300" cy="12" r="1.500" fill="#5865f2"/></svg></div>
  <div><svg viewBox="0 0 24 24"><path d="M12 1l9 4v12l-9 6-9-6V5z" fill="#183b64" stroke="#dfe8f2" stroke-width="1.300"/><path d="M3 5l9 5 9-5M12 10v13" stroke="#fff" stroke-width="1.300" fill="none"/><path d="M8 4l4-1.500L16 4l-4 2z" fill="#fff"/></svg></div>
  <div class="run"><svg viewBox="0 0 24 24"><path d="M0 0h24v24H0z" fill="#0067df"/><text x="12" y="17.500" text-anchor="middle" font-size="15" font-weight="700" fill="#fff">Ui</text></svg></div>
  <div class="lit npp"><svg viewBox="0 0 24 24"><path d="M3 1h17v22H3z" fill="#f2f6ea" stroke="#888"/><path d="M4 14l15-2v10H4z" fill="#7ccc1b"/><path d="M5 1v3M8 1v3M11 1v3M14 1v3M6.500 9v5M8 11.500h1M10.500 11.500h1" stroke="#444" stroke-width="1"/><path d="M21 1l2 2-6 14-2 1 .3-3z" fill="#f3a21c" stroke="#865" stroke-width=".5"/></svg></div>
  <div class="tray">
    <svg viewBox="0 0 16 16"><path d="M2.500 11L8 5l5.500 6"/></svg>
    <svg viewBox="0 0 16 16"><rect width="16" height="16" rx="1.500" fill="#ee7a22" stroke="none"/><path d="M8 2q3 2 0 4-1.500 1.500.5 3M4 10q4 1.500 7 0M4 13q4 1.500 8 0" stroke-width="1.100"/></svg>
    <svg viewBox="0 0 16 16"><path d="M1 3q4 0 6.500-2Q10 3 14 3v5q-1 5-6.500 7Q2 13 1 8z" fill="#fff" stroke="none"/><path d="M7.500 1v14M1 7.500h13" stroke="#371b33"/><path d="M11 7l5 9H6z" fill="#ffc20e" stroke="none"/><path d="M11 10v3M11 14v1" stroke="#222"/></svg>
    <svg viewBox="0 0 16 16"><path d="M5 3h10.500v8.500H5M10 11.500V15M6 15h7M.8 1.500h4v4h-4zM2.800 5.500V15"/></svg>
    <svg viewBox="0 0 16 16"><path d="M.7 6v4h2L6 13V3L2.700 6zM8.500 6q1.500 2 0 4M10.800 4.500q2.500 3.500 0 7M13 3q4 5 0 10"/></svg>
    <span>ENG</span>
    <time>14:28<br>30.11.2021</time>
    <div class="note"><svg viewBox="0 0 18 18"><path d="M1 1h16v12H9l-3 3v-3H1z" fill="#fff" stroke="none"/><path d="M4 4.500h10M4 7h10M4 9.500h6" stroke="#371b33"/></svg><em>2</em></div>
  </div>
</footer>
<div class="frame"></div>
</body>
</html>
```
FILE: styles.css
```css
*{box-sizing:border-box}
body{margin:0;width:1920px;height:1080px;overflow:hidden;background:#fff;color:#1f1f1f;font-family:"Open Sans","Noto Sans",sans-serif;position:relative}
svg{display:block;flex:none}
.defs{position:absolute}
i,em{font-style:normal}
.frame{position:absolute;inset:4px 4px 4px 4px;border:2px solid #f00;z-index:9}
.screen{display:grid;grid-template-columns:41px 1879px;height:1040px}

.rail{background:#0a0a0a;border-right:1px solid #999;display:grid;padding:8px 0 0 8px;grid-template-rows:81px 43px 47px 30px 30px 30px 30px 46px 30px 30px 45px 45px 31px 31px 44px 407px 24px;color:#bdbdbd}
.rail svg{width:24px;height:24px;fill:none;stroke:#bdbdbd;stroke-width:1.2}

.browser{display:flex;flex-direction:column;min-width:0}
.tabs{height:31px;background:#0a0a0a;display:flex;align-items:stretch;color:#c4c4c4;font-size:12px;letter-spacing:-.35px;position:relative;background-image:linear-gradient(90deg,#bbb 0,#bbb 1100px,#555 1350px,#0a0a0a 1450px);background-size:100% 1px;background-position:0 30px;background-repeat:no-repeat}
.tab{width:198px;display:flex;align-items:center;padding:0 0 0 6px;gap:3px}
.tab .fav{width:16px;height:16px}
.tab span{width:147px;overflow:hidden;white-space:nowrap;-webkit-mask-image:linear-gradient(90deg,#000 125px,transparent 145px);mask-image:linear-gradient(90deg,#000 125px,transparent 145px)}
.tab .full{-webkit-mask-image:none;mask-image:none;letter-spacing:-.4px}
.tab .cl{width:12px;height:12px}
.tab.on{background:#141414;border:1px solid #ccc;border-bottom:0;width:197px;margin-right:1px;padding-left:5px;color:#fff;border-top-left-radius:4px}
.new{width:12px;height:12px;margin:9px 0 0 7px;stroke:#ccc}
.win{margin-left:auto;display:flex;gap:24px;padding:7px 12px 0 0}
.win svg{width:16px;height:16px;fill:none;stroke:#ccc;stroke-width:1.2}

.address{height:37px;background:#141414;display:flex;align-items:center;padding-left:9px}
.address svg{width:16px;height:16px;margin-right:17px;fill:none;stroke:#ccc;stroke-width:1.2;color:#ccc}
.address .dim{stroke:#4a4a4a}
.address>svg:nth-of-type(3){margin-right:8px}
.address>svg:nth-of-type(4){margin-right:8px}
.cash{width:54px;height:15px;border:1px solid #ccc;color:#ddd;font-size:8px;font-weight:600;line-height:13px;text-align:center;margin-right:7px}
.url{color:#a9a9a9;font-size:14px;letter-spacing:-.35px;white-space:nowrap}
.url b{font-weight:400;color:#fff}
.tools{margin-left:auto;display:grid;grid-template-columns:26px 26px 27px 25px 17px 21px 31px 30px 32px 33px 27px}
.address .tools svg{margin:0}

.bookmarks{height:33px;background:#141414;color:#c4c4c4;font-size:12px;letter-spacing:-.36px;display:grid;grid-template-columns:149px 148px 60px 147px 148px 127px 148px 88px 146px 90px;padding-left:14px;align-items:center}
.bookmarks a{display:flex;align-items:center;gap:8px;white-space:nowrap;height:30px;margin-top:-4px}
.bookmarks svg,.bookmarks i{width:16px;height:16px}
.bookmarks i{line-height:16px;text-align:center;font-size:12px}
.bookmarks .f{font-family:"Liberation Serif",serif;font-size:16px;color:#fff}
.bookmarks .ud{background:#e86222;color:#ffe920;font-family:"Liberation Serif",serif;font-weight:bold}

.page{height:939px;background:#fff}
.top{height:65px;border-bottom:1px solid #dcdcdc;display:flex;align-items:flex-start;padding-left:23px}
.logo{width:152px;color:#0056d2;font:700 30px/36px Inter,sans-serif;font-feature-settings:"cv11";letter-spacing:-.35px;padding-top:12px}
.bar{width:2px;height:25px;background:#ddd;margin:20px 184px 0 0}
.drop{width:20px;height:20px;border:1px solid #ccc;border-radius:50%;margin:22px 24px 0 0;display:grid;place-items:center}
.drop svg{width:8px;height:6px}
.search{margin-top:12px;width:374px;height:36px;display:flex;font:16px/36px "Liberation Sans",sans-serif;color:#666;letter-spacing:-.1px}
.search span{width:300px;border:1px solid #c7cbd1;border-radius:3px 0 0 3px;padding-left:12px}
.search button{width:74px;border:0;background:#0056d2;color:#fff;font:700 14px "Liberation Sans",sans-serif;border-radius:0 3px 3px 0;padding:0}
.user{margin:12px 11px 0 auto;border-left:2px solid #ddd;height:41px;padding-left:24px;display:flex;align-items:center;font:14.500px "Liberation Sans",sans-serif;color:#333;letter-spacing:-.25px}
.ava{width:40px;height:40px;margin-right:6px}
.user span{width:146px;white-space:nowrap}
.chev{width:11px;height:8px}

.crumbs{display:flex;align-items:center;height:66px;padding:0 0 0 244px;font-size:13px;letter-spacing:-.28px;white-space:nowrap}
.crumbs a{color:#0056d2}
.crumbs>span{letter-spacing:-.33px}
.crumbs a:nth-of-type(1){width:181px}
.crumbs a:nth-of-type(2){width:74px;font:14px "Liberation Sans",sans-serif}
.crumbs svg{width:10px;height:16px;color:#333}
.crumbs>svg:nth-of-type(1){margin-right:15px}
.crumbs>svg:nth-of-type(2){margin-right:7px}
.pager{margin:4px 257px 0 auto;display:flex;align-items:center;font:700 13.800px "Liberation Sans",sans-serif;color:#0056d2;letter-spacing:0}
.crumbs .pager svg{color:#0056d2}
.pager b:nth-of-type(1){margin:0 32px 0 12px}
.pager b:nth-of-type(2){margin-right:13px}

.cols{display:grid;grid-template-columns:508px 1137px 16px;height:808px;align-items:start}
.lessons{padding:7px 0 0 220px}
.lessons h3{font-size:14px;font-weight:700;line-height:32px;margin:0 0 0 24px;letter-spacing:-.03px}
.les{width:288px;padding:8px 16px 8px 24px;display:flex;gap:11px;font-size:12px;line-height:18px;color:#333}
.les svg{width:20px;height:20px;margin-top:4px}
.les p{margin:0;width:216px;letter-spacing:.03px;white-space:nowrap}
.les b{font-weight:700}
.les small{display:block;font-size:12px;line-height:18px;margin-top:2px;color:#636363}
.les.cur{background:#f5f5f5;border-left:6px solid #2a73cc;padding-left:18px}
main{padding:51px 0 0 92px}
h1{font-size:40px;font-weight:400;line-height:60px;margin:0 0 19px 3px;letter-spacing:-.7px}
.acts{display:flex;align-items:center;height:26px;padding-left:4px;color:#0056d2;font:700 15.900px "Liberation Sans",sans-serif}
.acts svg{width:13px;height:16px;fill:none;stroke:#0056d2;stroke-width:1;margin-right:9px}
.acts b{margin-right:34px}
.below{margin-top:34px;font-size:15.700px}
.below b{margin-right:38px}
.below b:nth-of-type(2){margin-right:9px}
.acts .dn{width:15px;height:10px}
.scroll{background:#f1f1f1;height:801px;margin-top:7px;display:flex;flex-direction:column;width:15px;align-items:center}
.scroll svg{width:16px;height:15px}
.scroll i{width:15px;height:254px;background:#cdcdcd;margin-bottom:auto}

/* lecture video frame */
.video{width:952px;height:537px;margin-top:32px;border:2px solid #7ba6e6;background:#000;padding:10px 0;position:relative;font:5.700px/7px "Noto Sans",sans-serif;color:#3a3a3a;display:flex;flex-direction:column}
.video svg{overflow:visible}
.vtitle{height:15px;background:#0c71df;color:#d9e9fb;display:flex;line-height:15px;font-size:6px}
.vtitle span{width:37px;text-align:center}
.vtitle .sel{background:#fafafa;color:#0c71df;width:32px}
.vtitle em{margin-left:318px}
.vtitle svg{width:148px;height:15px;margin-left:auto}
.ribbon{height:37px;background:#f7f7f7;border-bottom:1px solid #ddd;display:grid;padding-top:4px;grid-template-columns:18px 15px 28px 25px 34px 39px 32px 37px 24px 30px 30px 32px 55px 31px 30px 32px 1fr;text-align:center;line-height:5.500px;font-size:5.600px;white-space:nowrap}
.ribbon svg{width:12px;height:12px;margin:0 auto 4px;fill:none;stroke:#666;stroke-width:.8}
.rb:nth-child(4),.rc,.rb:nth-child(6),.rb:nth-child(7),.rb:nth-child(11),.rb:nth-child(12),.rb:nth-child(13),.rb:nth-child(14),.rb:nth-child(16){box-shadow:inset -1px 0 #e2e2e2}
.ribbon .bl{stroke:#0c71df}
.ribbon .fb{fill:#0c71df;stroke:none}
.ribbon .off{opacity:.45}
.rc span{display:flex;align-items:center;gap:3px;height:11px;padding-left:7px}
.rc span svg{width:8px;height:8px;margin:0}
.work{height:433px;background:#f0f0f1;display:grid;grid-template-columns:16px 125px 3px 637px 3px 148px 16px}
.acti{grid-column:2}
.mainp{grid-column:4}
.props{grid-column:6}
.rdock{grid-column:7}
.dock span{display:flex;align-items:center;writing-mode:vertical-rl;gap:2px;color:#555;white-space:nowrap;width:14px;border-left:3px solid #d4d4d8}
.dock{padding-top:2px}
.ldock span{margin-bottom:6px}
.p1{height:29px}.p2{height:33px}
.dock.rdock{padding-left:2px}
.rdock span{border-left:0;border-right:3px solid #d0d0d4}
.p3{height:36px;margin-bottom:6px}.p4{height:56px;margin-bottom:6px;letter-spacing:-.1px}.p5{height:31px}
.dock svg{width:7px;height:8px;fill:none;stroke:#666;stroke-width:.7}
.acti,.props{margin-top:2px;height:431px;background:#fff;border:1px solid #dcdcdc;overflow:hidden}
.ph{height:11px;background:#f1f1f2;display:flex;align-items:center;padding:0 3px 0 2px;gap:4px;font-size:6px}
.ph i{flex:1;height:3px;background:radial-gradient(#ccc 35%,transparent 40%) 0 0/2px 2px}
.ph svg{width:5px;height:6px}
.pt{height:15px;background:#f1f1f2;border-bottom:1px solid #ddd;padding:2px 0 0 3px}
.pt svg{width:40px;height:10px}
.ps{height:11px;border-bottom:1px solid #ddd;display:flex;align-items:center;justify-content:space-between;padding:0 3px 0 1px;font-size:6px}
.ps svg{width:5px;height:5px}
.tree{list-style:none;margin:0;padding:.5px 0 0;font-size:6px}
.tree li{height:11.840px;display:flex;align-items:center;white-space:nowrap;letter-spacing:-.08px}
.tree svg{width:4px;height:4px;margin-right:4px}
.tree .leaf svg{width:8px;height:8px;margin-right:2px}
.tree b{color:#e8622f;font-weight:500}
.l0{padding-left:3.500px}.l1{padding-left:13.500px}.l2{padding-left:23.500px}.l3{padding-left:33.500px}
.l2.leaf{padding-left:32.500px}.l3.leaf{padding-left:41.500px}.l4{padding-left:51.500px}
.hot{background:#ececee}
.mainp{display:flex;flex-direction:column;margin-top:1px;overflow:hidden}
.mt{height:11px;border-bottom:1px solid #3f80c8;display:flex;justify-content:space-between}
.mt span{width:32px;background:#0c71df;color:#fff;padding-left:3px;line-height:10px;font-size:6px;white-space:nowrap}
.mb{height:15px;background:#fff;border-bottom:1px solid #e4e4e4;display:flex;gap:5px;line-height:15px;font-size:6px;letter-spacing:-.05px;padding:0 3px 0 4px}
.mb span:first-child{margin-right:auto}
.canvas{height:396px;background:#fff;position:relative;display:flex}
.f1{width:235px;height:356px;margin-left:197px;border:1px solid #e6e6e6;border-top:0;padding:0 9px 0 10px}
.f2{height:338px;border:1px solid #e6e6e6;border-top:0;padding:0 14px 0 13px}
.f3{height:325px;border:1px solid #e6e6e6;border-top:0;padding:2px 9px 0 10px}
.pc{width:8px;height:8px;margin:0 auto 2px}
.low{margin-top:2px}
.f1>.pc{margin-top:3px}
.card{height:52px;border:1px solid #e2e2e2;background:#fff}
.card.big{height:66px}
.card.act{border-color:#a9cbe8}
.act .ch{background:#b9d8f3}
.ch{height:10px;background:#f0f0f1;display:flex;align-items:center;gap:4px;padding:0 2px 0 1px;white-space:nowrap;font-size:6px;color:#333;font-weight:500;letter-spacing:-.07px}
.ch svg{width:8px;height:8px}
.ch .u{width:6px;height:6px;margin-left:auto}
.cb{display:flex;justify-content:space-between;padding:4px 8px 0 14px}
.cb>svg{width:9px;height:9px}
.shot{width:124px;height:34px;border:1px solid #ccc;overflow:hidden}
.red{width:128px;margin-left:-2px;border-right:3px solid #ccc;border-bottom:0}
.red i{display:block;line-height:4px;height:4px;padding-left:2px;font-weight:bold}
.red u{display:block;margin-right:3px;height:30px;border:1px solid #e38f7a;border-bottom:0}
.tb{width:122px;height:32px}
.ci{display:flex;margin:3px 8px 0 8px;gap:3px;line-height:9px;font-size:6px}
.ci span{width:139px;height:11px;border:1px solid #d2d2d2;padding-left:2px;white-space:nowrap}
.ci b{font-size:8px;font-weight:400;line-height:10px}
.arr{height:20px;width:1px;background:#ddd;margin:0 auto;display:flex;align-items:flex-end;justify-content:center}
.arr::after{content:"";border:2px solid transparent;border-top:4px solid #ccc;border-bottom:0;flex:none}
.vs{margin-left:auto;width:9px;background:#f3f3f3;display:flex;flex-direction:column}
.vs i{height:8px;border:1px solid #ddd;background:#fff;text-align:center;line-height:6px;font-size:5px}
.vs b{margin-top:95px;flex:1;background:#fff;border:1px solid #d4d4d4}
.cursor{position:absolute;left:339px;top:263px;width:8px;height:12px}
.mf{flex:1;background:#f3f3f4;display:flex;align-items:center;gap:7px;padding:0 2px 0 4px;font-size:6px;letter-spacing:-.1px}
.mf svg{width:92px;height:10px;margin-left:auto}
.pn{height:14px;background:#f1f1f2;line-height:13px;padding-left:1px;font-size:6px;letter-spacing:-.17px}
.pg{height:10px;background:#ededee;font-weight:700;line-height:10px;font-size:6px;display:flex;align-items:center;gap:3px;padding-left:1px}
.pg::before,.ex::before{content:"";width:5px;height:5px;border:.6px solid #555;background:linear-gradient(#555,#555) center/3px 1px no-repeat}
.pr{height:11.200px;border-left:6px solid #f0f0f1;border-bottom:1px solid #f1f1f1;display:flex;align-items:center;font-size:6px;letter-spacing:-.07px;white-space:nowrap;padding-left:3px;gap:2px}
.pr.w{height:12.350px}
.pr.ex{border-left:0;padding-left:1px;gap:0}
.ex::before{margin-right:3px}
.pr span{width:80px;flex:none}
.pr.ex span{width:82px}
.pr em{width:36px;height:10px;border:1px solid #d8d8d8;overflow:hidden;line-height:8px;padding-left:2px;flex:none;font-style:italic;color:#888;letter-spacing:-.15px}
.pr.n em{font-style:normal;color:#333}
.pr.l em{width:44px}
.pr q{quotes:none;padding-left:2px;overflow:hidden}
.pr i{width:7px;height:7px;border:1px solid #888;margin-left:2px}
.pr u,.pr s{text-decoration:none;width:8px;height:9px;border:1px solid #ddd;line-height:6px;text-align:center;flex:none;font-size:5px}
.pr.s u{font-size:8px;line-height:5px}
.pr s{margin-left:auto}
.outs{height:16px;background:#f0f0f1;display:flex;gap:6px;padding:4px 0 0 16px;font-size:6px;color:#555;line-height:9px;letter-spacing:-.15px}
.outs span{border-bottom:3px solid #d0d0d2;height:12px}
.status{flex:1;background:#0c71df;color:#e4effc;display:flex;justify-content:flex-end;line-height:12px;gap:12px;padding-right:8px;letter-spacing:0}
.status span:first-child{margin-right:-5px}
.caption{position:absolute;left:303px;top:470px;width:341px;height:31px;background:rgba(28,28,28,.9);color:#fff;font:27px/30px "Liberation Sans",sans-serif;text-align:center;white-space:nowrap}

.taskbar{height:40px;background:#371b33;display:grid;grid-template-columns:repeat(19,49px) 1fr;font-family:"Open Sans",sans-serif;color:#fff}
.taskbar>div{display:flex;align-items:center;justify-content:center;position:relative;width:48px}
.taskbar>div>svg{width:24px;height:24px}
.taskbar>.tray>svg{width:16px;height:16px}
.run::after{content:"";position:absolute;left:4px;right:4px;bottom:0;height:2px;background:#f77af5}
.lit{background:#5d4459;border-bottom:2px solid #f77af5;padding-top:2px}
.npp{background:#4b3247}
.opr{color:#f01e50}
.tg{background:#b45f2c;border-bottom:2px solid #ff7b00;padding-top:2px}
.taskbar em{position:absolute;right:6px;bottom:6px;height:14px;min-width:14px;background:#d40000;font-size:10px;line-height:14px;text-align:center;border-radius:3px;letter-spacing:-.5px;padding:0 1px}
.taskbar .tg em{right:10px;bottom:3px;background:#f03b3b}
.taskbar .tray{width:auto;justify-content:flex-end;padding-right:24px;font-size:12px}
.tray svg{fill:none;stroke:#fff;stroke-width:1.1;margin-right:8px}
.tray>span{margin-left:3px;letter-spacing:-.4px;width:36px}
.tray time{text-align:center;line-height:18.500px;width:54px;letter-spacing:-.5px;white-space:nowrap;margin-right:17px}
.note{position:relative}
.tray .note svg{width:18px;height:18px;margin:0}
.tray .note em{right:-8px;bottom:-7px;background:#444;border-radius:50%;width:15px;height:15px;font-weight:600;border:1px solid #777;line-height:13px}
```
